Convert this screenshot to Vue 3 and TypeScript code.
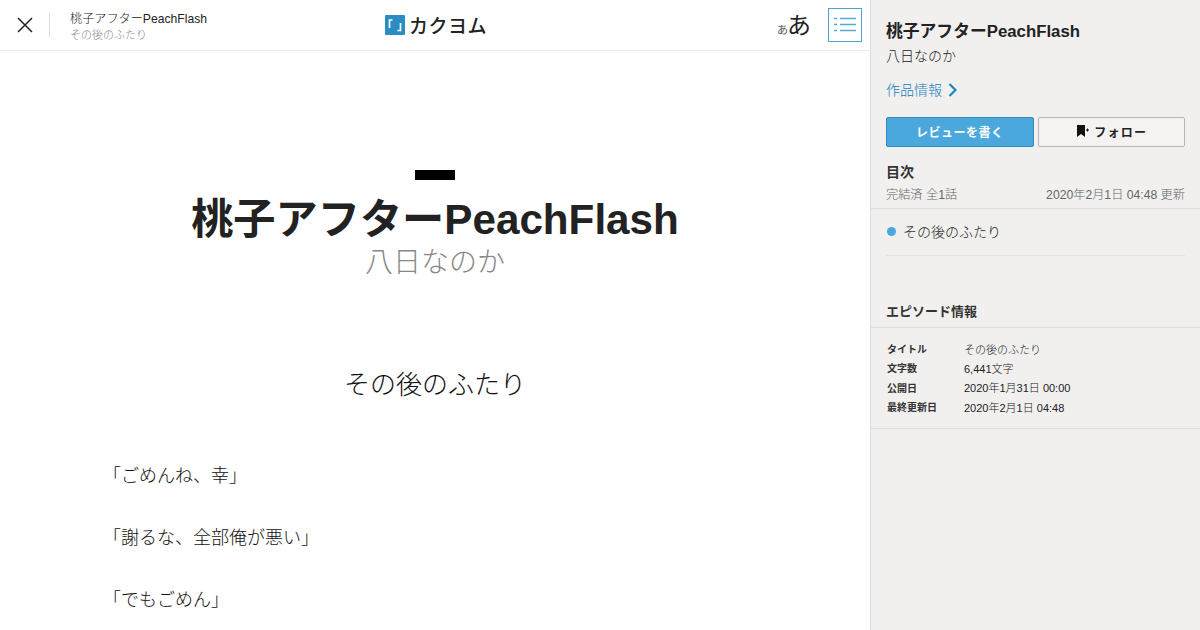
<template>
  <div class="page">
    <main class="reader">
      <header class="topbar">
        <div class="topbar-left">
          <button class="close-button" type="button" aria-label="閉じる">
            <svg width="16" height="16" viewBox="0 0 16 16">
              <path d="M1 1L15 15M15 1L1 15" stroke="#222" stroke-width="1.5" fill="none" />
            </svg>
          </button>
          <div class="crumb">
            <div class="crumb-title">{{ work.title }}</div>
            <div class="crumb-episode">{{ work.episode }}</div>
          </div>
        </div>
        <div class="logo">
          <svg width="20" height="20" viewBox="0 0 20 20">
            <rect width="20" height="20" rx="1" fill="#2b8cc4" />
            <path d="M7.500 5H4.500V13M12.500 15.500H15.500V8" stroke="#fff" stroke-width="1.700" fill="none" />
          </svg>
          <span class="logo-text">カクヨム</span>
        </div>
        <div class="topbar-right">
          <div class="font-size"><small>あ</small>あ</div>
          <button class="toc-button" type="button" aria-label="目次">
            <svg width="22" height="18" viewBox="0 0 22 18">
              <path d="M0 2.500H3M6 2.500H22M0 8.500H3M6 8.500H22M0 14.500H3M6 14.500H22" stroke="#5aa9d6" stroke-width="1.500" fill="none" />
            </svg>
          </button>
        </div>
      </header>

      <article class="body">
        <div class="mark"></div>
        <h1 class="work-title">{{ work.title }}</h1>
        <div class="work-author">{{ work.author }}</div>
        <h2 class="episode-title">{{ work.episode }}</h2>
        <p v-for="line in lines" :key="line" class="line">{{ line }}</p>
      </article>
    </main>

    <aside class="side">
      <div class="side-head">
        <div class="side-title">{{ work.title }}</div>
        <div class="side-author">{{ work.author }}</div>
        <a class="side-link">
          作品情報
          <svg width="9" height="14" viewBox="0 0 9 14">
            <path d="M1.500 1L7.500 7L1.500 13" stroke="#1b87c0" stroke-width="2.200" fill="none" />
          </svg>
        </a>
        <div class="side-actions">
          <button class="btn btn-review" type="button">レビューを書く</button>
          <button class="btn btn-follow" type="button">
            <svg width="12" height="12" viewBox="0 0 12 12">
              <path d="M0 0H8V12L4 9L0 12Z" fill="#111" />
              <path d="M9 5H12M10.500 3.500V6.500" stroke="#111" stroke-width="1" fill="none" />
            </svg>
            フォロー
          </button>
        </div>
      </div>

      <section class="toc">
        <h3 class="section-title">目次</h3>
        <div class="toc-meta">
          <span>完結済 全1話</span>
          <span>2020年2月1日 04:48 更新</span>
        </div>
      </section>
      <div class="toc-item-wrap">
        <div class="toc-item"><i class="dot"></i>{{ work.episode }}</div>
      </div>

      <h3 class="section-title info-title">エピソード情報</h3>
      <dl class="info">
        <template v-for="row in info" :key="row.label">
          <dt>{{ row.label }}</dt>
          <dd>{{ row.value }}</dd>
        </template>
      </dl>
    </aside>
  </div>
</template>

<script setup lang="ts">
const work = {
  title: '桃子アフターPeachFlash',
  episode: 'その後のふたり',
  author: '八日なのか',
}

const lines = ['「ごめんね、幸」', '「謝るな、全部俺が悪い」', '「でもごめん」']

const info = [
  { label: 'タイトル', value: 'その後のふたり' },
  { label: '文字数', value: '6,441文字' },
  { label: '公開日', value: '2020年1月31日 00:00' },
  { label: '最終更新日', value: '2020年2月1日 04:48' },
]
</script>

<style>
html,
body {
  margin: 0;
  background: #fff;
  overflow: hidden;
}
</style>

<style scoped>
.page {
  display: flex;
  width: 1200px;
  height: 630px;
  overflow: hidden;
  font-family: "Liberation Sans", "Noto Sans CJK JP", sans-serif;
  font-weight: 300;
  color: #111;
}

.reader {
  width: 870px;
  flex-shrink: 0;
  border-right: 1px solid #ddd;
  overflow: hidden;
}

.topbar {
  display: grid;
  grid-template-columns: 1fr auto 1fr;
  align-items: center;
  height: 50px;
  border-bottom: 1px solid #eee;
}

.topbar-left {
  display: flex;
  align-items: center;
}

.close-button {
  display: flex;
  align-items: center;
  justify-content: center;
  width: 50px;
  height: 24px;
  padding: 0 0 0 1px;
  border: 0;
  border-right: 1px solid #ddd;
  background: none;
}

.crumb {
  margin-left: 20px;
  padding-top: 2px;
}

.crumb-title {
  font-size: 12.150px;
  line-height: 16px;
  color: #222;
}

.crumb-episode {
  margin-top: 1px;
  font-size: 11px;
  line-height: 14px;
  color: #888;
}

.logo {
  display: flex;
  align-items: center;
  gap: 4px;
  padding-left: 2px;
  margin-top: -1px;
}

.logo-text {
  font-size: 19px;
  font-weight: 500;
  letter-spacing: 0.500px;
  color: #222;
}

.topbar-right {
  display: flex;
  justify-content: flex-end;
  align-items: center;
  gap: 17px;
  padding-right: 8px;
}

.font-size {
  margin-top: 5px;
  font-size: 24px;
  font-weight: 400;
  line-height: 30px;
  color: #222;
}

.font-size small {
  font-size: 11px;
  letter-spacing: -1px;
  color: #555;
}

.toc-button {
  display: flex;
  align-items: center;
  justify-content: center;
  width: 34px;
  height: 34px;
  padding: 0;
  border: 1px solid #4ba3d4;
  background: #fff;
}

.body {
  padding-top: 119px;
}

.mark {
  width: 40px;
  height: 10px;
  margin: 0 auto;
  background: #000;
}

.work-title {
  margin: 14px 0 0;
  font-size: 42.200px;
  line-height: 52px;
  font-weight: 700;
  text-align: center;
  color: #222;
}

.work-author {
  font-size: 28px;
  line-height: 34px;
  text-align: center;
  color: #888;
}

.episode-title {
  margin: 85px 0 0;
  font-size: 26px;
  line-height: 40px;
  font-weight: 300;
  text-align: center;
  color: #111;
}

.line {
  margin: 0 0 26px 103px;
  font-size: 18px;
  line-height: 36px;
  color: #111;
}

.episode-title + .line {
  margin-top: 53px;
}

.side {
  flex: 1;
  min-width: 0;
  background: #f1f0ef;
}

.side-head {
  padding: 20px 15px 0;
}

.side-title {
  font-size: 16.800px;
  line-height: 24px;
  font-weight: 700;
  color: #222;
}

.side-author {
  margin-top: 1px;
  font-size: 14px;
  line-height: 22px;
  color: #222;
}

.side-link {
  display: flex;
  align-items: center;
  gap: 6px;
  margin-top: 12px;
  font-size: 14px;
  line-height: 22px;
  color: #1280ba;
}

.side-actions {
  display: flex;
  gap: 4px;
  margin-top: 16px;
}

.btn {
  display: flex;
  flex: 1;
  align-items: center;
  justify-content: center;
  height: 30px;
  padding: 0 0 2px;
  border-radius: 2px;
  font-family: inherit;
  font-size: 12px;
  font-weight: 700;
  letter-spacing: 0.500px;
}

.btn-review {
  border: 1px solid #2b8cc4;
  background: #4ba8dd;
  color: #fff;
}

.btn-follow {
  gap: 5px;
  border: 1px solid #b5b5b5;
  background: #f4f3f1;
  color: #222;
  letter-spacing: 1.300px;
}

.btn-follow svg {
  margin-left: 2px;
}

.toc {
  margin-top: 16px;
  padding: 0 15px 4px;
  border-bottom: 1px solid #ddd;
}

.section-title {
  margin: 0;
  font-size: 14px;
  line-height: 18px;
  font-weight: 700;
  color: #333;
}

.toc-meta {
  display: flex;
  justify-content: space-between;
  margin-top: 5px;
  font-size: 12.200px;
  line-height: 18px;
  color: #666;
}

.toc-item-wrap {
  padding: 0 15px;
}

.toc-item {
  display: flex;
  align-items: center;
  gap: 7px;
  height: 44px;
  padding-bottom: 2px;
  border-bottom: 1px solid #e2e2e2;
  font-size: 14px;
  color: #222;
}

.dot {
  width: 9px;
  height: 9px;
  margin-left: 1px;
  border-radius: 50%;
  background: #4ba8dd;
}

.info-title {
  padding: 0 15px 6px;
  margin-top: 47px;
  border-bottom: 1px solid #ddd;
  font-size: 13px;
}

.info {
  display: grid;
  grid-template-columns: 77px 1fr;
  grid-auto-rows: 19.300px;
  align-items: center;
  margin: 0;
  padding: 11px 15px 12px 16px;
  border-bottom: 1px solid #ddd;
  font-size: 11px;
}

.info dt {
  font-size: 10px;
  font-weight: 700;
  color: #333;
}

.info dd {
  margin: 0;
  color: #222;
}
</style>
